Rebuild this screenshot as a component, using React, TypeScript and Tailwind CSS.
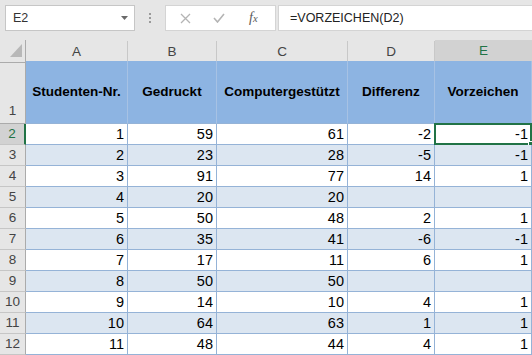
import React from "react";

type Row = [number, number, number, number | null, number | null];

const rows: Row[] = [
  [1, 59, 61, -2, -1],
  [2, 23, 28, -5, -1],
  [3, 91, 77, 14, 1],
  [4, 20, 20, null, null],
  [5, 50, 48, 2, 1],
  [6, 35, 41, -6, -1],
  [7, 17, 11, 6, 1],
  [8, 50, 50, null, null],
  [9, 14, 10, 4, 1],
  [10, 64, 63, 1, 1],
  [11, 48, 44, 4, 1],
];

const cols = ["A", "B", "C", "D", "E"];
const headers = ["Studenten-Nr.", "Gedruckt", "Computergestützt", "Differenz", "Vorzeichen"];

const gridCols = "grid grid-cols-[26px_102px_89px_131px_87px_97px]";

export default function App() {
  return (
    <div className="w-[532px] h-[355px] overflow-hidden bg-[#e6e6e6] font-['Liberation_Sans',Arial,sans-serif] text-black">
      {/* Formula bar */}
      <div className="flex items-start h-[40px] pt-[5px] pl-[5px]">
        <div className="flex items-center justify-between w-[130px] h-[26px] bg-white border border-[#c6c6c6] pl-[7px] pr-[6px]">
          <span className="text-[12.5px] text-[#333]">E2</span>
          <svg width="7" height="4" viewBox="0 0 7 4">
            <path d="M0 0h7L3.5 4z" fill="#6a6a6a" />
          </svg>
        </div>
        <div className="flex flex-col gap-[2px] mx-[14px] mt-[8px] w-[2px]">
          <span className="w-[2px] h-[2px] bg-[#9a9a9a]" />
          <span className="w-[2px] h-[2px] bg-[#9a9a9a]" />
          <span className="w-[2px] h-[2px] bg-[#9a9a9a]" />
        </div>
        <div className="flex items-center w-[111px] h-[26px] bg-white border border-[#d4d4d4] pl-[14px]">
          <svg width="11" height="11" viewBox="0 0 11 11">
            <path d="M1 1l9 9M10 1l-9 9" stroke="#b4b4b4" strokeWidth="1.3" />
          </svg>
          <svg className="ml-[22px]" width="12" height="10" viewBox="0 0 12 10">
            <path d="M1 5l3.5 4L11 1" stroke="#b4b4b4" strokeWidth="1.6" fill="none" />
          </svg>
          <span className="ml-[24px] font-['Liberation_Serif',serif] italic text-[14px] text-[#5a5a5a] leading-none">
            f<span className="text-[10.5px]">x</span>
          </span>
        </div>
        <div className="flex items-center flex-1 h-[26px] ml-[2px] bg-white border border-r-0 border-[#d4d4d4] pl-[11px]">
          <span className="text-[12.5px] text-[#222]">=VORZEICHEN(D2)</span>
        </div>
      </div>

      {/* Column headers */}
      <div className={`${gridCols} h-[21px]`}>
        <div className="relative border-r border-b border-[#ababab]">
          <svg className="absolute left-[10px] top-[4px]" width="12" height="13" viewBox="0 0 12 13">
            <path d="M12 0v13H0z" fill="#b8b8b8" />
          </svg>
        </div>
        {cols.map((c) => {
          const sel = c === "E";
          return (
            <div
              key={c}
              className={
                sel
                  ? "flex items-center justify-center bg-[#d2d2d2] border-b-2 border-[#217346] text-[13.5px] text-[#217346] pt-[1px]"
                  : "flex items-center justify-center border-r border-b border-r-[#c8c8c8] border-b-[#ababab] text-[13.5px] text-[#444] mt-[1px]"
              }
            >
              {c}
            </div>
          );
        })}
      </div>

      {/* Header row 1 */}
      <div className={`${gridCols} h-[63px]`}>
        <div className="flex items-end justify-center pb-[2px] border-r border-b border-[#ababab] text-[13.5px] text-[#444]">
          1
        </div>
        {headers.map((h) => (
          <div
            key={h}
            className="flex items-center justify-center bg-[#8db4e2] border-r border-b border-r-[#a7c2e4] border-b-[#95b3d7] text-[13.5px] font-bold whitespace-nowrap"
          >
            {h}
          </div>
        ))}
      </div>

      {/* Data rows */}
      {rows.map((r, idx) => {
        const n = idx + 2;
        const alt = idx % 2 === 1;
        const selRow = n === 2;
        return (
          <div key={n} className={`${gridCols} h-[21px]`}>
            <div
              className={
                selRow
                  ? "flex items-center justify-center bg-[#d2d2d2] border-r-2 border-r-[#217346] border-b border-b-[#c6c6c6] text-[13.5px] text-[#217346]"
                  : "flex items-center justify-center border-r border-b border-r-[#ababab] border-b-[#c6c6c6] text-[13.5px] text-[#444]"
              }
            >
              {n}
            </div>
            {r.map((v, j) => (
              <div
                key={j}
                className={`relative flex items-end justify-end pr-[3px] pb-[1px] border-r border-b border-[#95b3d7] text-[14.5px] leading-[18px] ${
                  alt ? "bg-[#dce6f1]" : "bg-white"
                }`}
              >
                {v === null ? "" : v}
                {selRow && j === 4 && (
                  <div className="absolute -left-[1px] -top-[1px] -right-[1px] -bottom-[1px] border-2 border-[#217346]">
                    <div className="absolute -right-[3px] -bottom-[3px] w-[5px] h-[5px] bg-[#217346] border border-white" />
                  </div>
                )}
              </div>
            ))}
          </div>
        );
      })}
    </div>
  );
}
